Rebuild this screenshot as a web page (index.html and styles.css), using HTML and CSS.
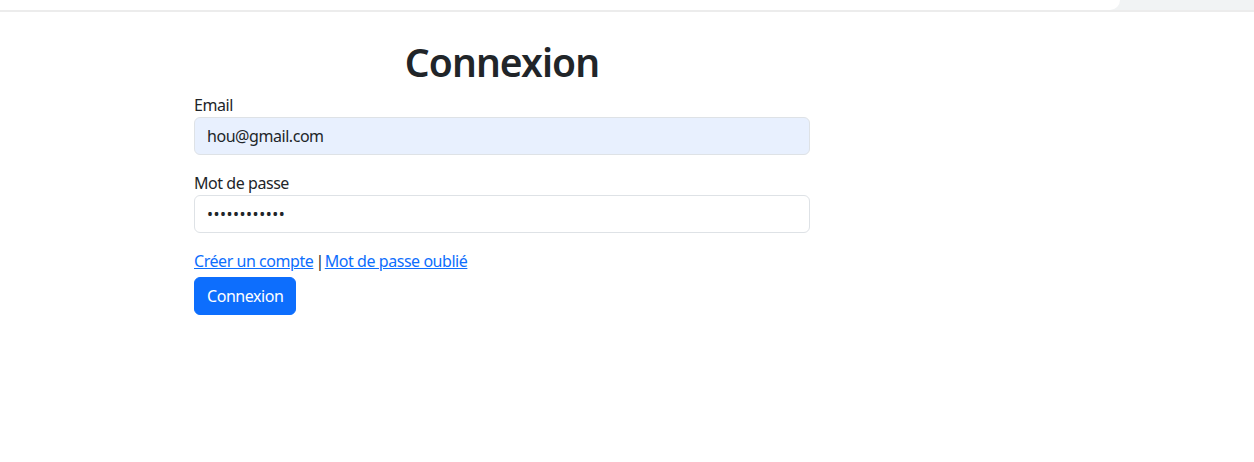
FILE: index.html
```html
<!DOCTYPE html>
<html lang="fr">
<head>
<meta charset="utf-8">
<title>Connexion</title>
<link rel="stylesheet" href="styles.css">
</head>
<body>
<div class="chrome">
  <div class="chrome-bar"></div>
  <div class="chrome-side"></div>
</div>
<main class="login">
  <h1 class="title">Connexion</h1>
  <form class="form">
    <div class="field">
      <label class="label" for="email">Email</label>
      <input class="input input-autofill" id="email" type="email" value="hou@gmail.com">
    </div>
    <div class="field">
      <label class="label" for="pwd">Mot de passe</label>
      <input class="input input-pwd" id="pwd" type="password" value="abcdefghijkl">
    </div>
    <div class="links">
      <a href="#" class="link">Créer un compte</a><span class="sep">|</span><a href="#" class="link">Mot de passe oublié</a>
    </div>
    <button type="button" class="btn">Connexion</button>
  </form>
</main>
</body>
</html>
```
FILE: styles.css
```css
* { box-sizing: border-box; }
html, body { margin: 0; padding: 0; background: #fff; }
body {
  font-family: "Noto Sans", "Open Sans", sans-serif;
  font-size: 16px;
  line-height: 1.5;
  letter-spacing: -0.45px;
  color: #212529;
}
.chrome {
  display: flex;
  height: 12px;
  border-bottom: 2px solid #ececec;
  background: #f1f3f4;
}
.chrome-bar {
  width: 1120px;
  background: #fff;
  border-bottom-right-radius: 14px;
}
.chrome-side { flex: 1; }
.login {
  width: 616px;
  margin-left: 194px;
  padding-top: 26px;
}
.title {
  margin: 0 0 7px;
  text-align: center;
  font-size: 39px;
  line-height: 48px;
  font-weight: 600;
  letter-spacing: -0.9px;
  color: #212529;
}
.form { display: flex; flex-direction: column; align-items: flex-start; }
.field { width: 100%; margin-bottom: 16px; }
.label { display: block; font-size: 16px; line-height: 24px; }
.input {
  display: block;
  width: 100%;
  height: 38px;
  padding: 6px 12px;
  font-family: inherit;
  font-size: 16px;
  line-height: 24px;
  letter-spacing: -0.45px;
  color: #212529;
  background: #fff;
  border: 1px solid #dee2e6;
  border-radius: 6px;
  outline: none;
}
.input-pwd { letter-spacing: 0.5px; }
.input-autofill { background: #e8f0fe; }
.links { line-height: 24px; margin-bottom: 4px; }
.sep { margin: 0 1px 0 2px; }
.link { color: #0d6efd; text-decoration: underline; }
.btn {
  font-family: inherit;
  font-size: 16px;
  line-height: 24px;
  letter-spacing: -0.45px;
  padding: 6px 12px;
  color: #fff;
  background: #0d6efd;
  border: 1px solid #0d6efd;
  border-radius: 6px;
  cursor: pointer;
}
```
